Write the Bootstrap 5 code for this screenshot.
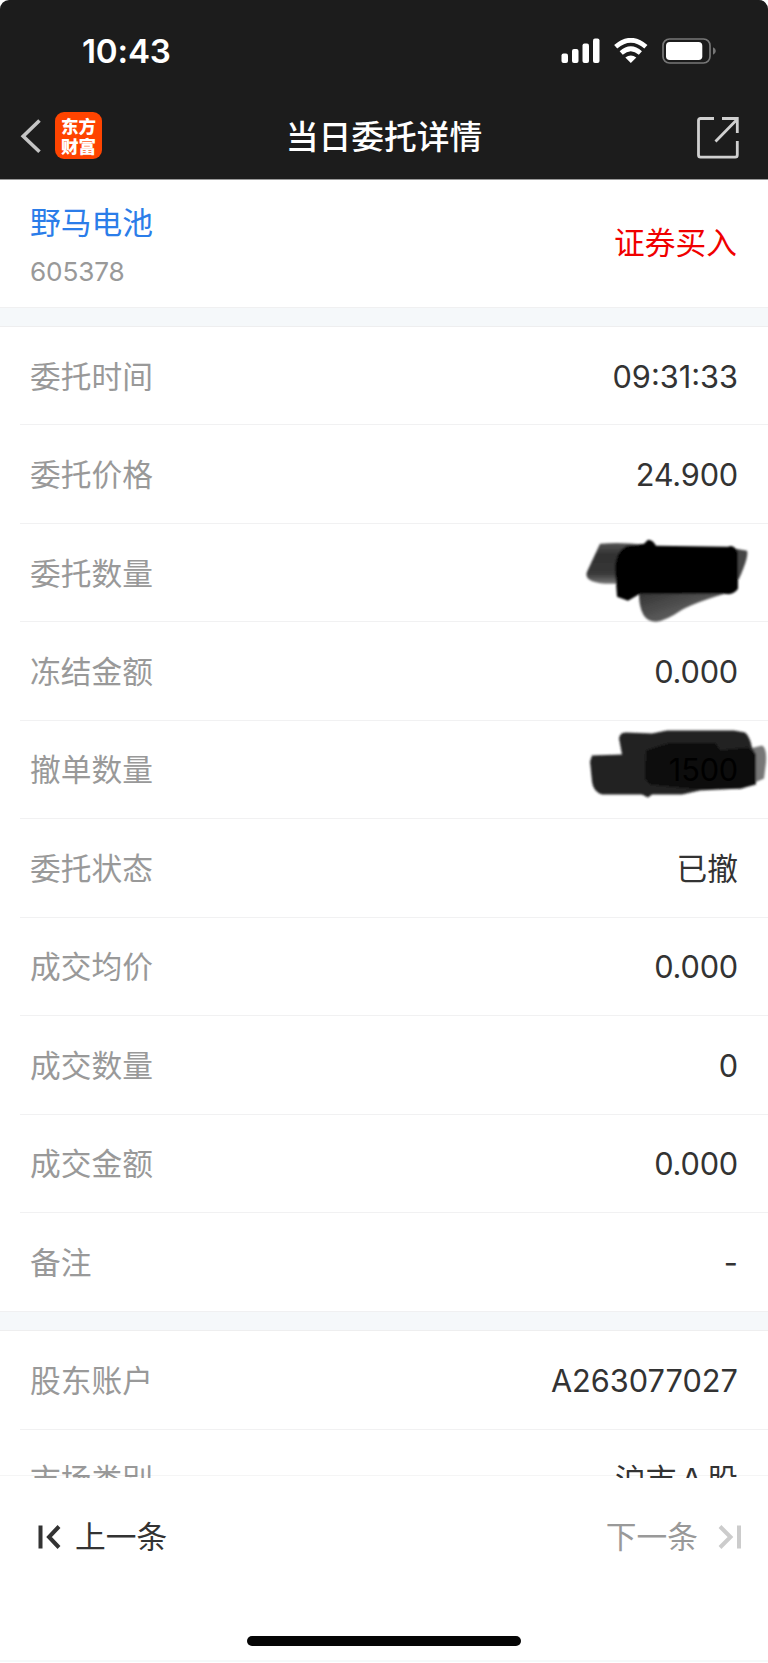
<!DOCTYPE html>
<html lang="zh-CN">
<head>
<meta charset="utf-8">
<meta name="viewport" content="width=device-width, initial-scale=1">
<title>当日委托详情</title>
<link href="https://cdn.jsdelivr.net/npm/bootstrap@5.3.0/dist/css/bootstrap.min.css" rel="stylesheet">
<style>
  html { background: #fff; }
  body { font-family: Inter, "Noto Sans CJK SC", sans-serif; font-size: 30.72px; font-weight: 370; line-height: 46px; color: #333; background: #fff; }
  .screen { height: 1663px; }
  .top-area { height: 180px; background: #1c1c1c; border-radius: 9px 9px 0 0; border-bottom: 1px solid #999; }
  .status-bar { height: 100px; padding: 2px 52px 0 82px; }
  .clock { font-size: 33.2px; font-weight: 600; letter-spacing: -.2px; }
  .title-bar { height: 72px; padding: 0 29px 0 20px; }
  .page-title { font-size: 32.77px; font-weight: 500; line-height: 48px; color: #fff; padding-top: 1px; }
  .app-logo { width: 47px; height: 47px; margin-top: -1px; border-radius: 9px; background: #ff4400; color: #fff; font-size: 17.5px; line-height: 19.3px; font-weight: 900; font-family: "Noto Sans CJK SC", sans-serif; }
  .stock { height: 127px; padding: 1px 31px 0 30px; }
  .stock-name { color: #2b7de9; line-height: 46px; padding-top: 1px; }
  .stock-code { color: #999; font-size: 26.2px; line-height: 36px; letter-spacing: -.15px; }
  .side-buy { color: #f00000; margin-top: -3px; }
  .gap-band { height: 20px; background: #f5f8fa; border-top: 1px solid #f0f0f1; border-bottom: 1px solid #eeeeef; }
  .entry { height: 98.45px; margin-left: 20px; padding: 2px 30px 0 10px; border-bottom: 1px solid #f1f1f2; }
  .entry.final { border-bottom: 0; }
  .tag { color: #999; }
  .dec { letter-spacing: -.2px; }
  .scribble { right: 0; top: 0; z-index: 0; overflow: visible; }
  .over { z-index: 1; color: #000; }
  .clip { height: 48px; overflow: hidden; }
  .clip::after { content: ""; position: absolute; left: 0; right: 0; bottom: 2px; height: 1px; background: rgba(0, 0, 0, .04); }
  .foot { height: 185px; background: #fff; }
  .foot-nav { height: 118px; padding: 0 26px 0 37px; }
  .next { color: #999; }
  .home-bar { width: 274px; height: 10px; border-radius: 5px; background: #050505; margin-top: 40px; }
  .base-line { height: 2px; margin-top: 14px; background: #f5f9f9; }
</style>
</head>
<body>
<div class="screen d-flex flex-column overflow-hidden">
  <header class="top-area flex-shrink-0 text-white">
    <div class="status-bar d-flex align-items-center justify-content-between">
      <span class="clock">10:43</span>
      <svg width="155" height="26" viewBox="0 0 155 26" fill="#fff">
        <rect x="0.5" y="15.5" width="6.5" height="9.5" rx="2"/><rect x="11" y="11" width="6.5" height="14" rx="2"/><rect x="21.5" y="5.500" width="6.5" height="19.5" rx="2"/><rect x="32" y="0.500" width="6.5" height="24.5" rx="2"/>
        <g fill="none" stroke="#fff" stroke-width="4.700"><path d="M54.700 8.800Q69.800-4.300 84.900 8.800"/><path d="M60.200 14.900Q69.800 6.500 79.400 14.900"/></g>
        <path d="M64.300 19.600Q69.800 15.600 75.300 19.600L69.800 25Z"/>
        <rect x="102" y="1" width="47" height="24" rx="6.500" fill="none" stroke="#777" stroke-width="1.700"/>
        <rect x="105" y="4" width="36.300" height="18" rx="3.800"/>
        <path d="M152 9.200q2.800 1.300 2.800 3.800t-2.800 3.800z" fill="#777"/>
      </svg>
    </div>
    <div class="title-bar d-flex align-items-center justify-content-between position-relative">
      <div class="d-flex align-items-center">
        <svg width="35" height="36" viewBox="0 0 35 36" fill="none" stroke="#c4c4c4" stroke-width="3.600"><path d="M19.500 2.500L3.200 18.200L19.500 33.800"/></svg>
        <div class="app-logo d-flex flex-column align-items-center justify-content-center"><span>东方</span><span>财富</span></div>
      </div>
      <h1 class="page-title m-0 position-absolute start-50 translate-middle-x">当日委托详情</h1>
      <svg class="mt-1" width="42" height="42" viewBox="0 0 42 42" fill="none" stroke="#d0d0d0" stroke-width="2.800"><path d="M17 1.500H3.500Q1.500 1.500 1.500 3.500V38Q1.500 40.200 3.500 40.200H38.200Q40.300 40.200 40.300 38V24M25 1.500H40.300V16M18.500 24.500L40 2.500"/></svg>
    </div>
  </header>

  <section class="stock flex-shrink-0 d-flex align-items-center justify-content-between">
    <div class="d-flex flex-column"><span class="stock-name">野马电池</span><span class="stock-code mt-2">605378</span></div>
    <span class="side-buy">证券买入</span>
  </section>
  <div class="gap-band flex-shrink-0"></div>

  <main class="flex-shrink-0">
    <div class="entry d-flex align-items-center justify-content-between"><span class="tag">委托时间</span><span>09:31:33</span></div>
    <div class="entry d-flex align-items-center justify-content-between"><span class="tag">委托价格</span><span class="dec">24.900</span></div>
    <div class="entry d-flex align-items-center justify-content-between position-relative"><span class="tag">委托数量</span>
      <svg class="scribble position-absolute" width="208" height="110" viewBox="0 3.200 208 110">
        <defs><filter id="soft" x="-10%" y="-10%" width="120%" height="120%"><feGaussianBlur stdDeviation="1.300"/></filter>
        <linearGradient id="tail" x1="0" y1="0" x2="1" y2="1"><stop offset="0" stop-color="#333"/><stop offset="1" stop-color="#777"/></linearGradient>
        <linearGradient id="wing" x1="0" y1="0" x2="0" y2="1"><stop offset="0" stop-color="#555"/><stop offset=".3" stop-color="#303030"/><stop offset=".75" stop-color="#383838"/><stop offset="1" stop-color="#777"/></linearGradient></defs>
        <g filter="url(#soft)">
          <path d="M40 23Q60 21 85 24L78 63H45Q23 61 27 51Z" fill="url(#wing)"/>
          <path d="M79 72Q79 101 96 101Q106 100 122 89Q137 81 168 72Z" fill="url(#tail)"/>
          <path d="M170 27L187 30Q189 36 179 58L170 68Z" fill="#444"/>
          <path d="M67 25Q80 24 84 23L88 19Q93 19 96 25L168 26Q174 23 178 32V68Q173 75 165 73H80L68 80L57 76L55 48Q56 30 67 25Z" fill="#000"/>
        </g>
      </svg>
    </div>
    <div class="entry d-flex align-items-center justify-content-between"><span class="tag">冻结金额</span><span class="dec">0.000</span></div>
    <div class="entry d-flex align-items-center justify-content-between position-relative"><span class="tag">撤单数量</span>
      <svg class="scribble position-absolute" width="208" height="110" viewBox="0 20.500 208 110">
        <g filter="url(#soft)">
          <path d="M190 48L202 45Q207 47 206 62L204 78L195 82H188Z" fill="#777"/>
          <path d="M32 55L62 54L59 38Q60 31 67 32L92 33L107 30L174 30L185 32Q190 36 192 47L196 54V84L181 88L140 90L122 94L92 94L88 97L82 94L42 94Q33 91 32 81L30 61Z" fill="#242424"/>
          <path d="M86 50L108 43L156 43L160 50L188 47L196 54V83L181 88L130 88L90 84L85 78Z" fill="#0b0b0b"/>
        </g>
      </svg>
      <span class="over dec position-relative">1500</span>
    </div>
    <div class="entry d-flex align-items-center justify-content-between"><span class="tag">委托状态</span><span>已撤</span></div>
    <div class="entry d-flex align-items-center justify-content-between"><span class="tag">成交均价</span><span class="dec">0.000</span></div>
    <div class="entry d-flex align-items-center justify-content-between"><span class="tag">成交数量</span><span class="dec">0</span></div>
    <div class="entry d-flex align-items-center justify-content-between"><span class="tag">成交金额</span><span class="dec">0.000</span></div>
    <div class="entry final d-flex align-items-center justify-content-between"><span class="tag">备注</span><span>-</span></div>
  </main>
  <div class="gap-band flex-shrink-0"></div>
  <section class="flex-shrink-0">
    <div class="entry d-flex align-items-center justify-content-between"><span class="tag">股东账户</span><span>A263077027</span></div>
    <div class="clip position-relative"><div class="entry d-flex align-items-center justify-content-between"><span class="tag">市场类别</span><span>沪市Ａ股</span></div></div>
  </section>

  <footer class="foot flex-shrink-0">
    <div class="foot-nav d-flex align-items-center justify-content-between">
      <div class="d-flex align-items-center">
        <svg width="38" height="24" viewBox="0 0 38 24" fill="none" stroke="#333" stroke-width="4"><path d="M3.500 .5V23.500M22 1.500L12 12L22 22.500"/></svg>
        <span>上一条</span>
      </div>
      <div class="next d-flex align-items-center">
        <span>下一条</span>
        <svg width="44" height="24" viewBox="0 0 44 24" fill="none" stroke="#ccc" stroke-width="4"><path d="M41 .5V23.500M22 1.500L32.500 12L22 22.500"/></svg>
      </div>
    </div>
    <div class="home-bar mx-auto"></div>
    <div class="base-line"></div>
  </footer>
</div>
<script src="https://cdn.jsdelivr.net/npm/bootstrap@5.3.0/dist/js/bootstrap.bundle.min.js"></script>
</body>
</html>
